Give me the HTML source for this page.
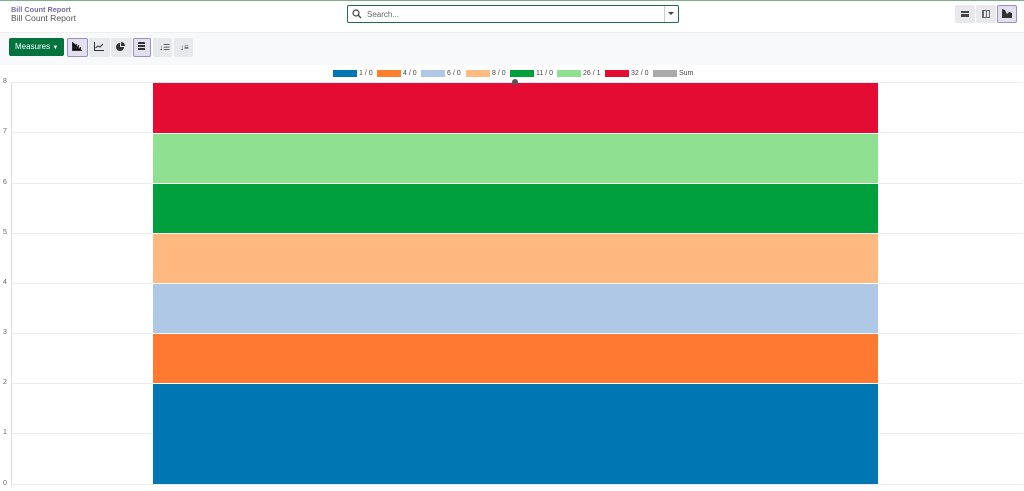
<!DOCTYPE html>
<html><head><style>
*{box-sizing:border-box;margin:0;padding:0}
body{width:1024px;height:491px;background:#fff;font-family:"Liberation Sans",sans-serif;position:relative;overflow:hidden}
.a{position:absolute}
.btn{position:absolute;height:19px;background:#e7e9ed;border-radius:2px}
.btn.sel{background:#e2dff0;border:1px solid #9d8fc2}
.leg{position:absolute;top:70px;height:7px;width:24px}
.lt{position:absolute;top:70px;font-size:7px;color:#444}
.yl{position:absolute;left:3px;font-size:7px;color:#666}
.g{position:absolute;left:11px;width:1012px;height:1px;background:#ececec}
</style></head><body>
<div class="a" style="left:0;top:0;width:1024px;height:1px;background:#7fae8a"></div>
<div class="a" style="left:11px;top:5px;font-size:7.3px;color:#7a6c9c;font-weight:bold">Bill Count Report</div>
<div class="a" style="left:11px;top:13px;font-size:8.6px;color:#555">Bill Count Report</div>
<div class="a" style="left:347px;top:5px;width:332px;height:18px;border:1px solid #1f6e4a;border-radius:2px"></div>
<svg class="a" style="left:352px;top:9px" width="10" height="10"><circle cx="4" cy="4" r="3" fill="none" stroke="#444" stroke-width="1.2"/><path d="M6 6L9 9" stroke="#444" stroke-width="1.3"/></svg>
<div class="a" style="left:367px;top:10px;font-size:8px;color:#666">Search...</div>
<div class="a" style="left:664px;top:6px;width:1px;height:16px;background:#ccc"></div>
<div class="a" style="left:668px;top:12px;border-left:3px solid transparent;border-right:3px solid transparent;border-top:3px solid #444"></div>
<div class="btn" style="left:955px;top:5px;width:20px;height:18px"></div>
<div class="btn" style="left:976px;top:5px;width:20px;height:18px"></div>
<div class="btn sel" style="left:997px;top:5px;width:20px;height:18px"></div>
<div class="a" style="left:961px;top:11px;width:8px;height:6px;border-top:2px solid #444;border-bottom:2px solid #444"><div style="height:1px;margin-top:1px;background:#444"></div></div>
<div class="a" style="left:982px;top:10px;width:8px;height:8px;border:1px solid #666;background:repeating-linear-gradient(90deg,#666 0 1px,transparent 1px 3px)"></div>
<svg class="a" style="left:1002px;top:9px" width="10" height="9"><path d="M0 0V9H10V4L7 3L5 5L3 1Z" fill="#333"/></svg>
<div class="a" style="left:0;top:32px;width:1024px;height:33px;background:#f8f9fa;border-top:1px solid #eee"></div>
<div class="a" style="left:9px;top:38px;width:55px;height:18px;background:#00733e;border-radius:2px;color:#fff;font-size:8px;line-height:18px;padding-left:6px">Measures <span style="font-size:6px">▼</span></div>
<div class="btn sel" style="left:67px;top:38px;width:21px"></div>
<div class="btn" style="left:89px;top:38px;width:21px"></div>
<div class="btn" style="left:111px;top:38px;width:21px"></div>
<div class="btn sel" style="left:133px;top:38px;width:18px"></div>
<div class="btn" style="left:153px;top:38px;width:19px"></div>
<div class="btn" style="left:174px;top:38px;width:19px"></div>
<svg class="a" style="left:72px;top:42px" width="10" height="9"><path d="M0.5 0V8.5H10M2.5 7V4M4.5 7V2M6.5 7V3M8.5 7V5" stroke="#333" stroke-width="1.2"/></svg>
<svg class="a" style="left:94px;top:42px" width="10" height="9"><path d="M0.5 0V8.5H10M1.5 6L4 4L6 5L9 2" stroke="#333" stroke-width="1" fill="none"/></svg>
<svg class="a" style="left:116px;top:42px" width="9" height="9"><path d="M4 1A4 4 0 1 0 8 5H4Z" fill="#333"/><path d="M5 0A4 4 0 0 1 9 4H5Z" fill="#333"/></svg>
<div class="a" style="left:138px;top:42px;width:7px;height:9px;border-radius:1px;background:repeating-linear-gradient(#333 0 2px,#e2dff0 2px 3px)"></div>
<div class="a" style="left:159px;top:43px;font-size:8px;color:#333">↓☰</div>
<div class="a" style="left:180px;top:43px;font-size:8px;color:#333">↓≡</div>
<div class="leg" style="left:333px;background:#0077b3"></div><div class="lt" style="left:359px">1 / 0</div>
<div class="leg" style="left:377px;background:#ff7f2a"></div><div class="lt" style="left:403px">4 / 0</div>
<div class="leg" style="left:421px;background:#aec8e6"></div><div class="lt" style="left:447px">6 / 0</div>
<div class="leg" style="left:466px;background:#ffbb80"></div><div class="lt" style="left:492px">8 / 0</div>
<div class="leg" style="left:510px;background:#00a03c"></div><div class="lt" style="left:536px">11 / 0</div>
<div class="leg" style="left:557px;background:#8fe090"></div><div class="lt" style="left:583px">26 / 1</div>
<div class="leg" style="left:605px;background:#e50c33"></div><div class="lt" style="left:631px">32 / 0</div>
<div class="leg" style="left:653px;background:#aaa"></div><div class="lt" style="left:679px">Sum</div>
<div class="a" style="left:11px;top:82px;width:1px;height:405px;background:#ddd"></div>
<div class="g" style="top:82px"></div><div class="g" style="top:132px"></div><div class="g" style="top:183px"></div><div class="g" style="top:233px"></div><div class="g" style="top:283px"></div><div class="g" style="top:333px"></div><div class="g" style="top:383px"></div><div class="g" style="top:433px"></div><div class="g" style="top:484px"></div>
<div class="yl" style="top:78px">8</div><div class="yl" style="top:128px">7</div><div class="yl" style="top:179px">6</div><div class="yl" style="top:229px">5</div><div class="yl" style="top:279px">4</div><div class="yl" style="top:329px">3</div><div class="yl" style="top:379px">2</div><div class="yl" style="top:429px">1</div><div class="yl" style="top:480px">0</div>
<div class="a" style="left:153px;top:83px;width:725px;height:50px;background:#e50c33"></div>
<div class="a" style="left:153px;top:133px;width:725px;height:50px;background:#8fe090;border-top:1px solid #fff"></div>
<div class="a" style="left:153px;top:183px;width:725px;height:50px;background:#00a03c;border-top:1px solid #fff"></div>
<div class="a" style="left:153px;top:233px;width:725px;height:50px;background:#ffb880;border-top:1px solid #fff"></div>
<div class="a" style="left:153px;top:283px;width:725px;height:50px;background:#aec8e6;border-top:1px solid #fff"></div>
<div class="a" style="left:153px;top:333px;width:725px;height:50px;background:#ff7a30;border-top:1px solid #fff"></div>
<div class="a" style="left:153px;top:383px;width:725px;height:101px;background:#0077b3;border-top:1px solid #fff"></div>
<div class="a" style="left:512px;top:79px;width:6px;height:6px;border-radius:50%;background:#555"></div>
</body></html>
